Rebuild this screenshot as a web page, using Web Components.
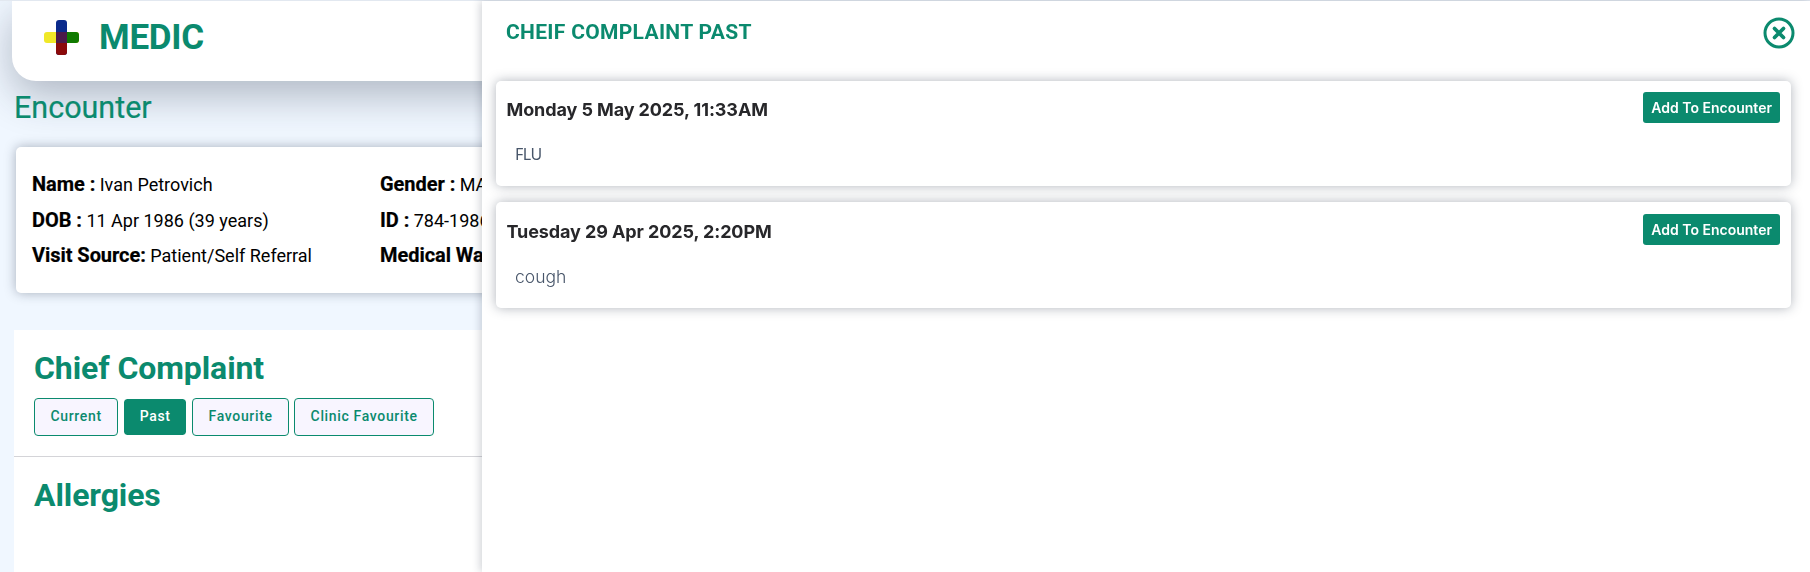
<!DOCTYPE html>
<html>
<head>
<meta charset="utf-8">
<style>
  html, body { margin: 0; height: 100%; overflow: hidden; }
  body { background: #f0f7ff; font-family: Roboto, sans-serif; --teal: #0b8a6e; }
</style>
</head>
<body>
<medic-app>
  <app-header slot="header"></app-header>
  <patient-card slot="patient">
    <info-item label="Name :">Ivan Petrovich</info-item>
    <info-item label="Gender :">MALE</info-item>
    <info-item label="DOB :">11 Apr 1986 (39 years)</info-item>
    <info-item label="ID :">784-1986</info-item>
    <info-item label="Visit Source:">Patient/Self Referral</info-item>
    <info-item label="Medical Ward"></info-item>
  </patient-card>
  <note-panel slot="notes">
    <note-section title="Chief Complaint">
      <tab-button>Current</tab-button>
      <tab-button active>Past</tab-button>
      <tab-button>Favourite</tab-button>
      <tab-button>Clinic Favourite</tab-button>
    </note-section>
    <note-section title="Allergies"></note-section>
  </note-panel>
</medic-app>
<side-drawer title="CHEIF COMPLAINT PAST">
  <past-entry date="Monday 5 May 2025, 11:33AM" text="FLU"></past-entry>
  <past-entry date="Tuesday 29 Apr 2025, 2:20PM" text="cough" wide></past-entry>
</side-drawer>

<script>
class MedicApp extends HTMLElement {
  connectedCallback() {
    this.attachShadow({ mode: 'open' });
    this.shadowRoot.innerHTML = `
      <style>
        :host { display: block; padding: 1px 0 0 12px; }
        .topline { position: absolute; left: 0; top: 0; right: 0; height: 1px; background: #e2e8f0; }
        h1 {
          margin: 7px 0 19px 2px;
          font: 400 30.5px/40px Roboto, sans-serif;
          color: var(--teal);
          -webkit-text-stroke: 0.2px var(--teal);
        }
        .card-wrap { margin: 0 0 37px 4px; }
        .notes-wrap { margin-left: 2px; }
      </style>
      <div class="topline"></div>
      <slot name="header"></slot>
      <h1>Encounter</h1>
      <div class="card-wrap"><slot name="patient"></slot></div>
      <div class="notes-wrap"><slot name="notes"></slot></div>
    `;
  }
}

class AppHeader extends HTMLElement {
  connectedCallback() {
    this.attachShadow({ mode: 'open' });
    this.shadowRoot.innerHTML = `
      <style>
        :host {
          display: flex;
          align-items: center;
          gap: 19px;
          height: 80px;
          padding: 0 0 6px 32px;
          box-sizing: border-box;
          background: #fff;
          border-bottom-left-radius: 24px;
          box-shadow: 0 15px 40px rgba(30, 41, 59, 0.3);
        }
        svg { display: block; }
        span { font: 700 35px/44px Roboto, sans-serif; color: var(--teal); letter-spacing: -0.25px; }
      </style>
      <svg width="36" height="36" viewBox="0 0 36 36">
        <rect x="12" y="0" width="11" height="35" rx="3" fill="#0a2a8c"/>
        <rect x="12" y="23" width="11" height="12" rx="3" fill="#8b0a0a"/>
        <rect x="12" y="20" width="11" height="6" fill="#8b0a0a"/>
        <rect x="0" y="12" width="35" height="11" rx="3" fill="#f0e828"/>
        <rect x="23" y="12" width="12" height="11" rx="3" fill="#107a00"/>
        <rect x="20" y="12" width="5" height="11" fill="#107a00"/>
        <rect x="12" y="12" width="11" height="11" fill="#4b1a4a"/>
      </svg>
      <span>MEDIC</span>
    `;
  }
}

class PatientCard extends HTMLElement {
  connectedCallback() {
    this.attachShadow({ mode: 'open' });
    this.shadowRoot.innerHTML = `
      <style>
        :host {
          display: grid;
          grid-template-columns: 348px 348px;
          grid-auto-rows: 35.5px;
          align-items: center;
          height: 146px;
          padding: 20px 16px;
          box-sizing: border-box;
          background: #fff;
          border-radius: 5px;
          box-shadow: 0 0 12px rgba(30, 41, 59, 0.35);
        }
      </style>
      <slot></slot>
    `;
  }
}

class InfoItem extends HTMLElement {
  connectedCallback() {
    this.attachShadow({ mode: 'open' });
    this.shadowRoot.innerHTML = `
      <style>
        :host { display: block; font: 400 18px/24px Roboto, sans-serif; color: #000; white-space: nowrap; }
        b { font-weight: 700; font-size: 20px; letter-spacing: -0.05px; -webkit-text-stroke: 0.2px #000; }
      </style>
      <b>${this.getAttribute('label')}</b> <slot></slot>
    `;
  }
}

class NotePanel extends HTMLElement {
  connectedCallback() {
    this.attachShadow({ mode: 'open' });
    this.shadowRoot.innerHTML = `
      <style>
        :host { display: block; background: #fff; height: 242px; overflow: hidden; }
        ::slotted(note-section:first-child) { border-bottom: 1px solid #d4d4d8; }
      </style>
      <slot></slot>
    `;
  }
}

class NoteSection extends HTMLElement {
  connectedCallback() {
    this.attachShadow({ mode: 'open' });
    this.shadowRoot.innerHTML = `
      <style>
        :host { display: block; padding: 20px 20px 20px; }
        h2 { margin: 0 0 12px; font: 700 32px/36px Roboto, sans-serif; color: var(--teal); letter-spacing: -0.1px; }
        .tabs { display: flex; gap: 5px; align-items: center; }
      </style>
      <h2>${this.getAttribute('title')}</h2>
      <div class="tabs"><slot></slot></div>
    `;
  }
}

class TabButton extends HTMLElement {
  connectedCallback() {
    this.attachShadow({ mode: 'open' });
    const active = this.hasAttribute('active');
    this.shadowRoot.innerHTML = `
      <style>
        :host {
          display: block;
          height: 38px;
          padding: 0 15.5px;
          box-sizing: border-box;
          border: 1px solid ${active ? '#fff' : 'var(--teal)'};
          border-radius: 4px;
          background: ${active ? 'var(--teal)' : '#f8f5ff'};
          background-clip: padding-box;
          color: ${active ? '#fff' : 'var(--teal)'};
          font: 500 14px/34px Roboto, sans-serif;
          letter-spacing: 0.65px;
        }
      </style>
      <slot></slot>
    `;
  }
}

class SideDrawer extends HTMLElement {
  connectedCallback() {
    this.attachShadow({ mode: 'open' });
    this.shadowRoot.innerHTML = `
      <style>
        :host {
          position: fixed;
          top: 1px;
          right: 0;
          bottom: 0;
          width: 1328px;
          background: #fff;
          box-shadow: -2px 0 8px rgba(30, 41, 59, 0.2);
          display: block;
        }
        header {
          display: flex;
          justify-content: space-between;
          align-items: flex-start;
          height: 79.7px;
          padding: 0 15px 0 24px;
          box-sizing: border-box;
        }
        h3 { margin: 19px 0 0; font: 700 21px/24px Roboto, sans-serif; color: var(--teal); letter-spacing: 0.32px; }
        svg { margin-top: 16px; display: block; }
        .list { display: flex; flex-direction: column; gap: 16px; padding: 0 19px 0 14px; }
      </style>
      <header>
        <h3>${this.getAttribute('title')}</h3>
        <svg width="32" height="32" viewBox="0 0 32 32" fill="none" stroke="#0b8a6e">
          <circle cx="16" cy="16" r="14" stroke-width="3"/>
          <path d="M11.5 11.5l9 9M20.5 11.5l-9 9" stroke-width="3.8" stroke-linecap="round"/>
        </svg>
      </header>
      <div class="list"><slot></slot></div>
    `;
  }
}

class PastEntry extends HTMLElement {
  connectedCallback() {
    this.attachShadow({ mode: 'open' });
    const wide = this.hasAttribute('wide');
    this.shadowRoot.innerHTML = `
      <style>
        :host {
          display: block;
          height: 105.5px;
          padding: 11.4px 11px 0 10px;
          box-sizing: border-box;
          background: #fff;
          border-radius: 5px;
          box-shadow: 0 0 12px rgba(30, 41, 59, 0.35);
        }
        .row { display: flex; justify-content: space-between; align-items: flex-start; height: 31px; }
        .date { padding: 2px 0 0 0.5px; font: 700 18px/31px Inter, sans-serif; color: #27272a; letter-spacing: -0.1px; }
        button {
          height: 31px;
          padding: 0 8px;
          border: 0;
          border-radius: 3px;
          background: var(--teal);
          color: #fff;
          font: 600 14px Inter, sans-serif;
          white-space: nowrap;
        }
        p {
          margin: ${wide ? 20 : 19}px 0 0 9px;
          font: ${wide ? '300 17.5px/24px Inter' : '400 16px/24px "Noto Sans"'}, sans-serif;
          letter-spacing: ${wide ? 0 : -0.5}px;
          color: #475569;
        }
      </style>
      <div class="row">
        <span class="date">${this.getAttribute('date')}</span>
        <button>Add To Encounter</button>
      </div>
      <p>${this.getAttribute('text')}</p>
    `;
  }
}

customElements.define('medic-app', MedicApp);
customElements.define('app-header', AppHeader);
customElements.define('patient-card', PatientCard);
customElements.define('info-item', InfoItem);
customElements.define('note-panel', NotePanel);
customElements.define('note-section', NoteSection);
customElements.define('tab-button', TabButton);
customElements.define('side-drawer', SideDrawer);
customElements.define('past-entry', PastEntry);
</script>
</body>
</html>
